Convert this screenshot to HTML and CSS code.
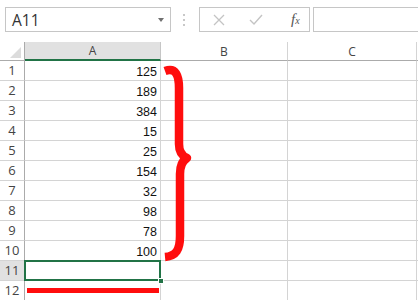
FILE: index.html
```html
<!DOCTYPE html>
<html lang="en">
<head>
  <title>Sheet</title>
  <link rel="stylesheet" href="styles.css">
</head>
<body>
  <main class="app">
    <div class="toolbar">
      <div class="namebox">
        <span>A11</span>
        <span class="caret"></span>
      </div>
      <div class="grip"><i></i><i></i><i></i></div>
      <div class="fxbtns">
        <svg width="12" height="12" viewBox="0 0 12 12"><path d="M1 1 L11 11 M11 1 L1 11" stroke="#c4c4c4" stroke-width="1.3" fill="none"/></svg>
        <svg width="14" height="12" viewBox="0 0 14 12"><path d="M1 6 L5 10 L13 1" stroke="#c4c4c4" stroke-width="1.4" fill="none"/></svg>
        <span class="fx">f<sub>x</sub></span>
      </div>
      <div class="formula"></div>
    </div>

    <div class="sheet">
      <div class="hd corner"><span class="tri"></span></div>
      <div class="hd col sel">A</div>
      <div class="hd col">B</div>
      <div class="hd col">C</div>
      <div class="hd col"></div>

      <div class="rh">1</div><div class="c num">125</div><div class="c"></div><div class="c"></div><div class="c"></div>
      <div class="rh">2</div><div class="c num">189</div><div class="c"></div><div class="c"></div><div class="c"></div>
      <div class="rh">3</div><div class="c num">384</div><div class="c"></div><div class="c"></div><div class="c"></div>
      <div class="rh">4</div><div class="c num">15</div><div class="c"></div><div class="c"></div><div class="c"></div>
      <div class="rh">5</div><div class="c num">25</div><div class="c"></div><div class="c"></div><div class="c"></div>
      <div class="rh">6</div><div class="c num">154</div><div class="c"></div><div class="c"></div><div class="c"></div>
      <div class="rh">7</div><div class="c num">32</div><div class="c"></div><div class="c"></div><div class="c"></div>
      <div class="rh">8</div><div class="c num">98</div><div class="c"></div><div class="c"></div><div class="c"></div>
      <div class="rh">9</div><div class="c num">78</div><div class="c"></div><div class="c"></div><div class="c"></div>
      <div class="rh">10</div><div class="c num">100</div><div class="c"></div><div class="c"></div><div class="c"></div>
      <div class="rh sel">11</div><div class="c active"></div><div class="c"></div><div class="c"></div><div class="c"></div>
      <div class="rh">12</div><div class="c"><div class="redline"></div></div><div class="c"></div><div class="c"></div><div class="c"></div>
    </div>

    <!-- hand drawn brace over the sheet -->
    <svg class="brace" width="418" height="300" viewBox="0 0 418 300">
      <path d="M165 71 C176 67 179 76 179 88 L179 144 C179 152 182 156 187 158 C182 161 180 166 180 174 L180 236 C180 250 176 256 165 257"
            stroke="#ff0d0d" stroke-width="8.5" fill="none" stroke-linecap="butt" stroke-linejoin="round"/>
    </svg>
  </main>
</body>
</html>
```

FILE: styles.css
```css
*,
*::before,
*::after {
  box-sizing: border-box;
}

html, body {
  margin: 0;
  background: #fff;
}

.app {
  position: relative;
  width: 418px;
  height: 300px;
  overflow: hidden;
  font-family: "Open Sans", sans-serif;
  color: #333;
}

.toolbar {
  display: flex;
  align-items: center;
  height: 42px;
  padding: 0 0 3px 5px;
}

.namebox {
  display: flex;
  align-items: center;
  justify-content: space-between;
  width: 166px;
  height: 25px;
  border: 1px solid #c6c6c6;
  padding: 0 6px 0 6px;
  font-size: 15.5px;
  color: #333;
}

.caret {
  width: 0;
  height: 0;
  border-left: 3.5px solid transparent;
  border-right: 3.5px solid transparent;
  border-top: 4px solid #707070;
}

.grip {
  display: flex;
  flex-direction: column;
  gap: 3px;
  margin: 0 14px 0 12px;
}
.grip i {
  display: block;
  width: 2px;
  height: 2px;
  background: #c8c8c8;
}

.fxbtns {
  display: flex;
  align-items: center;
  width: 111px;
  height: 25px;
  border: 1px solid #c6c6c6;
  padding-left: 13px;
}
.fxbtns svg:nth-child(2) {
  margin-left: 24px;
}

.fx {
  margin-left: 28px;
  font-family: "Liberation Serif", serif;
  font-style: italic;
  font-size: 15px;
  color: #555;
}
.fx sub {
  font-size: 10px;
  vertical-align: 0;
}

.formula {
  flex: 1;
  height: 25px;
  margin-left: 3px;
  border: 1px solid #c6c6c6;
  border-right: none;
}

.sheet {
  display: grid;
  grid-template-columns: 25px 136px 127px 129px 60px;
  grid-template-rows: 19px;
  grid-auto-rows: 20px;
}

.hd {
  display: flex;
  align-items: center;
  justify-content: center;
  border-right: 1px solid #d4d4d4;
  border-bottom: 1px solid #ababab;
  font-size: 12px;
  color: #444;
}
.hd.sel {
  background: #e1e1e1;
  border-bottom: 2px solid #217346;
  border-right-color: #c6c6c6;
}
.corner {
  position: relative;
  border-right-color: #ababab;
}
.corner .tri {
  position: absolute;
  right: 3px;
  bottom: 2px;
  width: 0;
  height: 0;
  border-left: 11px solid transparent;
  border-bottom: 11px solid #dcdcdc;
}

.rh {
  display: flex;
  align-items: flex-end;
  justify-content: center;
  padding-bottom: 1px;
  border-right: 1px solid #ababab;
  border-bottom: 1px solid #d4d4d4;
  font-size: 13px;
  color: #444;
}
.rh.sel {
  background: #e1e1e1;
}

.c {
  display: flex;
  align-items: flex-end;
  justify-content: flex-end;
  padding: 0 3px 1px 0;
  border-right: 1px solid #d4d4d4;
  border-bottom: 1px solid #d4d4d4;
  font-family: "Liberation Sans", Arial, sans-serif;
  font-size: 12.5px;
  color: #111;
}

.c.active {
  position: relative;
}
.c.active::before {
  content: "";
  position: absolute;
  top: -1px;
  left: -1px;
  right: -1px;
  bottom: -1px;
  border: 2px solid #217346;
}
.c.active::after {
  content: "";
  position: absolute;
  right: -4px;
  bottom: -4px;
  width: 6px;
  height: 6px;
  background: #217346;
  border: 1px solid #fff;
}

.c .redline {
  align-self: flex-start;
  width: 100%;
  height: 5px;
  margin: 7px -2px 0 1px;
  background: #ff0d0d;
}

.brace {
  position: absolute;
  left: 0;
  top: 0;
  pointer-events: none;
}
```
